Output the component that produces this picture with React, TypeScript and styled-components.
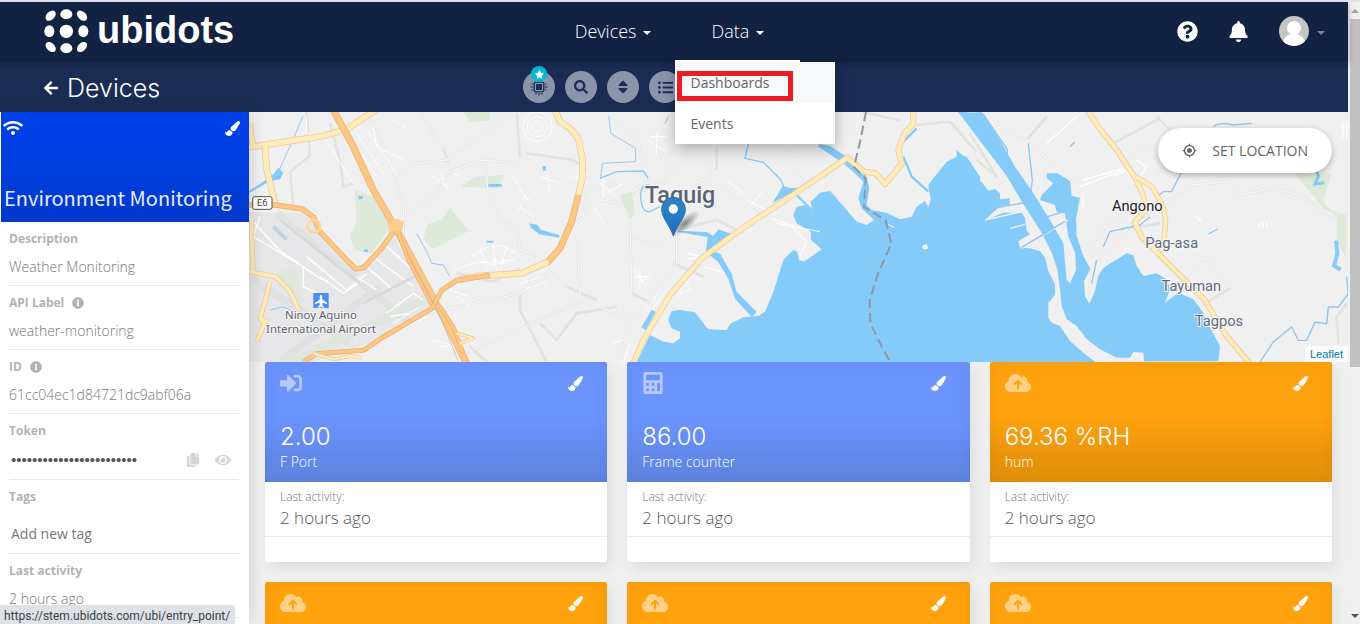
import React from "react";
import styled, { createGlobalStyle } from "styled-components";
import {
  FaArrowLeft, FaBell, FaCalculator, FaCopy, FaEye, FaInfoCircle, FaListUl, FaPaintBrush,
  FaQuestionCircle, FaSearch, FaSignInAlt, FaSort, FaStar, FaWifi,
} from "react-icons/fa";
import { FaCloudArrowUp } from "react-icons/fa6";
import { MdMyLocation } from "react-icons/md";

const GlobalStyle = createGlobalStyle`
  * { box-sizing: border-box; }
  body { margin: 0; background: #f0f0f0; font-family: "Open Sans", "Noto Sans", sans-serif; color: #666; }
  button { border: 0; padding: 0; background: none; font: inherit; color: inherit; cursor: pointer; }
  a { color: inherit; text-decoration: none; }
  h1, h2, p, dl, dd, ul { margin: 0; padding: 0; }
  svg { display: block; }
`;

const Window = styled.div`
  display: flex;
  height: 100vh;
  overflow: hidden;
  border-top: 2px solid #dee1e8;
`;
const Page = styled.div`
  flex: 1;
  min-width: 0;
  display: flex;
  flex-direction: column;
`;
const Header = styled.header`
  position: relative;
  z-index: 3;
  flex: none;
  height: 60px;
  padding: 0 23px 2px 44px;
  display: grid;
  grid-template-columns: 1fr auto 1fr;
  align-items: center;
  background: #122243;
  box-shadow: 0 2px 6px rgba(10, 20, 45, 0.35);
`;
const Brand = styled.a`
  display: flex;
  align-items: center;
  gap: 8px;
  color: #fff;
  font: bold 38px/54px "Liberation Sans", Arial, sans-serif;
`;
const BrandName = styled.span`
  margin-bottom: 2px;
`;
const Nav = styled.nav`
  display: flex;
  gap: 60px;
  margin-right: 30px;
`;
const NavItem = styled.div`
  position: relative;
`;
const NavButton = styled.button`
  display: flex;
  align-items: center;
  gap: 7px;
  color: #fff;
  font-size: 18px;
  font-weight: 300;
  line-height: 28px;
`;
const Caret = styled.span<{ $dim?: boolean }>`
  border: 4px solid transparent;
  border-top-color: ${(p) => (p.$dim ? "#7a839a" : "#fff")};
  border-bottom: 0;
  margin-top: 4px;
`;
const Menu = styled.ul`
  position: absolute;
  top: 45px;
  left: -36px;
  width: 160px;
  list-style: none;
  background: #fff;
  box-shadow: 0 5px 14px rgba(0, 0, 0, 0.28);
  &::before {
    content: "";
    position: absolute;
    bottom: 100%;
    left: 0;
    width: 125px;
    height: 2px;
    background: #fff;
  }
`;
const MenuLink = styled.a<{ $active?: boolean }>`
  position: relative;
  display: block;
  padding: 0 15px;
  font-size: 14px;
  line-height: 41px;
  color: #666;
  background: ${(p) => (p.$active ? "#f8f9fb" : "#fff")};
`;
const Highlight = styled.span`
  position: absolute;
  top: 9px;
  left: 2px;
  width: 116px;
  height: 30px;
  border: 5px solid #ed1c24;
`;
const UserTools = styled.div`
  display: flex;
  align-items: center;
  justify-content: flex-end;
  color: #fff;
`;
const ToolButton = styled.button`
  margin-right: 30px;
`;
const Account = styled.button`
  display: flex;
  align-items: center;
  gap: 8px;
`;
const SubHeader = styled.div`
  flex: none;
  height: 50px;
  display: flex;
  align-items: center;
  background: #1a2c54;
  color: #fff;
`;
const BackLink = styled.a`
  flex: 0 0 523px;
  padding: 2px 0 0 43px;
  display: flex;
  align-items: center;
  gap: 8px;
  font-size: 16px;
`;
const PageTitle = styled.h1`
  font: 300 25px/32px Inter, sans-serif;
`;
const Toolbar = styled.div`
  display: flex;
  gap: 10px;
`;
const RoundButton = styled.button`
  position: relative;
  width: 32px;
  height: 32px;
  border-radius: 50%;
  display: grid;
  place-items: center;
  background: #8b94aa;
  color: #1a2c54;
`;
const StarBadge = styled.span`
  position: absolute;
  top: -5px;
  left: 8px;
  width: 16px;
  height: 16px;
  border-radius: 50%;
  display: grid;
  place-items: center;
  background: #00bcd4;
  color: #fff;
`;
const Body = styled.div`
  flex: 1;
  min-height: 0;
  display: flex;
`;
const Sidebar = styled.aside`
  position: relative;
  z-index: 2;
  flex: 0 0 249px;
  min-width: 0;
  border-left: 1px solid #fff;
  background: #fff;
  box-shadow: 3px 0 14px rgba(0, 0, 0, 0.12);
`;
const DeviceHead = styled.div`
  height: 110px;
  padding: 5px 9px 9px 2px;
  display: flex;
  flex-direction: column;
  justify-content: space-between;
  color: #fff;
  background: linear-gradient(#0040e8, #003ee0 50%, #0038cb);
`;
const HeadIcons = styled.div`
  height: 22px;
  display: flex;
  justify-content: space-between;
  align-items: center;
`;
const DeviceName = styled.h2`
  padding-left: 1px;
  font: 400 20px/30px "Noto Sans CJK JP", "Noto Sans", sans-serif;
  color: #e6ebff;
  white-space: nowrap;
`;
const Field = styled.div<{ $height?: number }>`
  height: ${(p) => p.$height ?? 64}px;
  margin: 0 10px 0 8px;
  padding-top: 8px;
  border-bottom: 1px solid #e8e8e8;
`;
const FieldLabel = styled.dt`
  display: flex;
  align-items: center;
  gap: 8px;
  font-size: 12px;
  font-weight: 700;
  line-height: 18px;
  color: #b3b3b3;
`;
const FieldValue = styled.dd`
  padding-top: 8px;
  font-size: 14px;
  font-weight: 300;
  line-height: 22px;
  color: #777;
`;
const TokenRow = styled.div`
  display: flex;
  align-items: center;
  gap: 15px;
  padding: 1px 8px 0 0;
  color: #d4d4d4;
`;
const TokenInput = styled.input`
  flex: 1;
  min-width: 0;
  border: 0;
  padding: 0 2px;
  background: none;
  font: 15px/22px "Liberation Sans", sans-serif;
  color: #555;
  outline: 0;
`;
const TagInput = styled.input`
  width: 100%;
  margin-top: 9px;
  border: 0;
  padding: 0 2px;
  background: none;
  font: 14px/22px "Open Sans", sans-serif;
  outline: 0;
  &::placeholder { color: #777; opacity: 1; }
`;
const Main = styled.main`
  flex: 1;
  min-width: 0;
  overflow: hidden;
`;
const MapPanel = styled.section`
  position: relative;
  height: 250px;
  background: #f0f0f0;
`;
const SetLocation = styled.button`
  position: absolute;
  top: 16px;
  right: 16px;
  height: 45px;
  padding: 0 24px;
  border-radius: 23px;
  display: flex;
  align-items: center;
  gap: 15px;
  background: #fff;
  color: #666;
  font-size: 14px;
  box-shadow: 0 2px 6px rgba(0, 0, 0, 0.3);
`;
const Attribution = styled.a`
  position: absolute;
  right: 0;
  bottom: 0;
  padding: 0 5px;
  background: rgba(255, 255, 255, 0.75);
  color: #0078a8;
  font: 11px/16px "Liberation Sans", Arial, sans-serif;
`;
const CardGrid = styled.section`
  display: grid;
  grid-template-columns: repeat(3, 1fr);
  gap: 20px;
  padding: 0 16px 20px;
`;
const Card = styled.article`
  height: 200px;
  border-radius: 2px;
  overflow: hidden;
  background: #fff;
  box-shadow: 4px 6px 14px rgba(0, 0, 0, 0.08);
`;
const CardHead = styled.div<{ $tone: "blue" | "orange" }>`
  height: 120px;
  padding: 10px 24px 10px 15px;
  display: flex;
  flex-direction: column;
  justify-content: space-between;
  color: #fff;
  background: ${(p) =>
    p.$tone === "blue"
      ? "linear-gradient(#6b94ff 45%, #6289e9 80%, #6084e0)"
      : "linear-gradient(#ffa20d 45%, #e8940c 80%, #e2900a)"};
  box-shadow: inset 0 0 18px rgba(0, 0, 0, 0.05);
`;
const CardIcon = styled.span`
  opacity: 0.5;
`;
const Reading = styled.p`
  font: 300 24px/30px Inter, sans-serif;
`;
const VariableName = styled.p`
  font-size: 14px;
  font-weight: 300;
  line-height: 20px;
`;
const CardBody = styled.div`
  height: 55px;
  padding: 6px 15px 0;
  border-bottom: 1px solid #eaeaea;
  font-weight: 300;
`;
const Small = styled.p`
  font-size: 12px;
  line-height: 18px;
  color: #777;
`;
const Ago = styled.p`
  font-size: 17px;
  line-height: 24px;
  color: #555;
`;
const ScrollTrack = styled.div`
  flex: 0 0 12px;
  display: flex;
  flex-direction: column;
  justify-content: space-between;
  align-items: flex-end;
  background: #f0f0f0;
`;
const ScrollEnd = styled.span<{ $down?: boolean }>`
  width: 10px;
  height: 17px;
  display: grid;
  place-items: center;
  &::before {
    content: "";
    border: 4px solid transparent;
    ${(p) => (p.$down ? "border-top-color: #505050; border-bottom: 0;" : "border-bottom-color: #a3a3a3; border-top: 0;")}
  }
`;
const ScrollThumb = styled.span`
  width: 10px;
  height: 56%;
  margin-bottom: auto;
  background: #c1c1c1;
`;
const StatusBubble = styled.div`
  position: fixed;
  left: 0;
  bottom: 0;
  z-index: 5;
  padding: 4px 5px 0 4px;
  border-radius: 0 4px 0 0;
  background: #dee1e6;
  color: #3c4043;
  font-family: Roboto, sans-serif;
  font-size: 12px;
  line-height: 15px;
  white-space: nowrap;
`;

const LogoMark = () => (
  <svg width="45" height="45" viewBox="0 0 135 135" fill="#fff">
    <ellipse cx="67" cy="16" rx="18" ry="15" />
    <ellipse cx="67" cy="67" rx="20" ry="20" />
    <ellipse cx="67" cy="118" rx="18" ry="15" />
    <ellipse cx="16" cy="67" rx="15" ry="18" />
    <ellipse cx="118" cy="67" rx="15" ry="18" />
    <ellipse cx="20" cy="20" rx="18" ry="12" transform="rotate(-45 20 20)" />
    <ellipse cx="114" cy="20" rx="18" ry="12" transform="rotate(45 114 20)" />
    <ellipse cx="20" cy="114" rx="18" ry="12" transform="rotate(45 20 114)" />
    <ellipse cx="114" cy="114" rx="18" ry="12" transform="rotate(-45 114 114)" />
  </svg>
);

const ChipIcon = () => (
  <svg width="18" height="18" viewBox="0 0 18 18" fill="none" stroke="currentColor">
    <rect x="4.2" y="4.2" width="9.6" height="9.6" rx="1.5" strokeWidth="1.3" />
    <rect x="6" y="6" width="6" height="6" fill="currentColor" stroke="none" />
    <path d="M6 3V1.5M9 3V.5M12 3V1.5M6 15v1.5M9 15v2.5M12 15v1.5M3 6H1.5M3 9H.5M3 12H1.5M15 6h1.5M15 9h2.5M15 12h1.5" strokeWidth="1.2" />
  </svg>
);

const Avatar = () => (
  <svg width="30" height="30" viewBox="0 0 30 30">
    <defs><clipPath id="face"><circle cx="15" cy="15" r="15" /></clipPath></defs>
    <g clipPath="url(#face)">
      <rect width="30" height="30" fill="#c4c4c4" />
      <circle cx="15" cy="12" r="7" fill="#fff" />
      <path d="M3 31c0-8 5-12 9-13h6c4 1 9 5 9 13z" fill="#fff" />
    </g>
  </svg>
);

// Road drawn as a wide casing with a lighter fill on top of it.
const Road = ({ d, tone = "yellow", w = 16 }: { d: string; tone?: "yellow" | "orange"; w?: number }) => (
  <g fill="none" strokeLinejoin="round">
    <path d={d} stroke={tone === "orange" ? "#e6ad79" : "#ecc4a0"} strokeWidth={w + 4} />
    <path d={d} stroke={tone === "orange" ? "#fdc681" : "#fdebb8"} strokeWidth={w} />
  </g>
);

const StreetMap = () => (
  <svg width="100%" height="100%" viewBox="27 6 3297 750" preserveAspectRatio="xMinYMin slice" aria-label="Map of Taguig">
    <defs>
      <linearGradient id="pin" x1="0" y1="0" x2="0" y2="1">
        <stop offset="0" stopColor="#2e86c8" /><stop offset="1" stopColor="#1a6fc0" />
      </linearGradient>
      <radialGradient id="shade"><stop offset="0" stopColor="#000" stopOpacity=".45" /><stop offset="1" stopColor="#000" stopOpacity="0" /></radialGradient>
    </defs>
    <rect x="0" y="0" width="3400" height="800" fill="#f0f0f0" />

    {/* Airport and the city west of it */}
    <g>
      <path d="M27 305L200 310 350 480 460 380 590 580 440 680 220 756H27z" fill="#e7e7e9" />
      <path d="M110 310l400 330M27 500l300 200M420 530l-300 226" stroke="#dfe2e0" strokeWidth="22" fill="none" />
      <path d="M570 575L190 756h-60l420-200z" fill="#dfe6dd" />
      <path d="M27 320l90 100 130 90M60 320l-20 60 150 90v60l80 40M200 440l120 100 60-50M240 500l70 50 60-40M400 440l120 90M430 400l120 110M380 470l80 70M350 500l60 40M440 610l80-60 30 20M450 620l60-10" stroke="#fff" strokeWidth="4" fill="none" />
      <path d="M100 350l40 38" stroke="#b7d4e8" strokeWidth="12" />
      <path d="M370 580l170-90M120 330l240 190" stroke="#d9d9db" strokeWidth="8" />
      <path d="M345 240l60 20 15 40 30 15-5 50-20 20-30 45-50-10-15-40 20-50-5-60z" fill="#dfe9d9" />
      <path d="M632 293l55 70-110 55-28-30 14-45 42-15zM660 230l45-30 90-5-20 40zM670 6h80v25l-60 5zM110 485l50-10 25 30-10 40 20 30-25 5-40-60z" fill="#dfe9d9" />
      <path d="M390 6l70 180 30 100v100M460 200l70-40 90-10 70-50 120-90M300 150l10 80 30-10M540 6l70 110 15 40M490 320l90-60 60-80 90-30 100 10 30-30 140 20 40 30M735 160l10 90 40 80 45 20 10 70 60 20 80 90 90 40M830 10l10 130M650 490l110 25 80-40M560 610l280-60 80-60M690 710l50 45M840 550v50l80 156M700 720l200-90 130-60M1010 370l10 190M900 640l50 50 60-80 120-20M200 6l10 130-60 50 10 100M270 40l30 110M970 380l60-60 10-80 90-20" stroke="#e2e2e0" strokeWidth="8" fill="none" />
      <path d="M390 6l70 180 30 100v100M460 200l70-40 90-10 70-50 120-90M540 6l70 110M490 320l90-60 60-80 90-30 100 10 30-30M735 160l10 90 40 80 45 20 10 70 60 20 80 90M560 610l280-60 80-60M700 720l200-90 130-60M1010 370l10 190M970 380l60-60 10-80 90-20" stroke="#f7f7f6" strokeWidth="4" fill="none" />
      <g stroke="#fff" strokeWidth="3" fill="none">
        <circle cx="892" cy="50" r="44" /><circle cx="892" cy="50" r="30" /><circle cx="892" cy="50" r="16" />
        <path d="M330 80l80 120M350 70l80 120M380 60l90 130M460 30l40 25M700 440q60-60 130-10M690 460l130-10M720 415l20 65M760 405l10 80M800 410l-20 70M690 430q60 60 140 10M640 480l60-20M820 200l40 70 30-30M840 290l40 30M860 250l-30 60M900 200l60 20M920 190l10 60M990 200l60 20M580 200l40 30M600 190l30 60M640 190l50 20M1060 290l40 60M840 520l70-20M850 540l70-25M650 560l40 30M580 690l70 20M600 710h50M630 540l60 20M460 640l80-50M480 660l80-40" strokeDasharray="26 5" />
        <path d="M400 50l10 60 80 40M250 80l90 140M200 20v50l60 20" />
      </g>
      <path d="M188 20l-25 60-45 100-85 65M530 370l30 55 15 35 35 5 20 35M90 600l40-10 60 30" stroke="#9dc6ee" strokeWidth="3" fill="none" />
      <path d="M27 243l70-45 18-25 15 15-10 20-30 5-60 35z" fill="#84cbfa" />
      <path d="M868 340l25 5 10 15 55 15v8l-60-10-25-20zM745 222h40v8h-40zM356 258h12v10h-12zM372 418h12v8h-12zM740 392h20v6h-20zM908 168h10v14h-10z" fill="#84cbfa" />
      <Road d="M27 40l12 70M27 112l53-8 170-26 70-20 90-60" />
      <Road d="M75 108l5 70 25 100" />
      <Road d="M34 330l5 160M27 485l80 15 40 40 30 60M90 515l-15 60-15 50 15 10-25 60M60 630l25 5" w={11} />
      <Road d="M945 0l15 35 30 20 25 30 12 60v60l-12 50" />
      <Road d="M1015 255l-20 80-35 80-40 45" tone="orange" />
      <Road d="M925 455l-80 35-130 8-60 12" />
      <Road d="M27 285h80l80 12 35 25 15 40 80 85 30 30 25-5 55-60 50-70" tone="orange" w={12} />
      <Road d="M280 0l60 110 60 130 70 120 70 130 80 150 60 120" tone="orange" w={17} />
      <Road d="M475 370l30 80 50 95 25 50M600 590l40 60 30 80" tone="orange" w={8} />
      <Road d="M190 756l40-25 140-10 60-40 145-85 30-55 45-30 100-15" tone="orange" w={11} />
      <Road d="M220 730l60 18 50-10 35 6M650 670l50 15-40 15" w={7} />
      <circle cx="222" cy="349" r="19" fill="none" stroke="#fbd79d" strokeWidth="8" />
      <path d="M442 345l25-20 25 10-5 25-40 5z" fill="#fbd08f" />
      <path d="M505 430l100 200 50 125" stroke="#c9b29a" strokeWidth="2" fill="none" />
      <rect x="38" y="260" width="58" height="38" rx="6" fill="#fff" stroke="#555" strokeWidth="3" />
      <text x="67" y="289" fontFamily="Roboto" fontSize="28" fill="#444" textAnchor="middle">E6</text>
      <rect x="220" y="549" width="46" height="45" fill="#4a90f0" />
      <path d="M243 555c3 0 4 4 4 8v6l14 9v4l-14-4v8l5 4v3l-9-2-9 2v-3l5-4v-8l-14 4v-4l14-9v-6c0-4 1-8 4-8z" fill="#fff" />
      <g fontFamily="Noto Sans" fontSize="34" fill="#5d6068" stroke="#f4f4f4" strokeWidth="6" paintOrder="stroke" textAnchor="middle">
        <text x="243" y="627">Ninoy Aquino</text>
        <text x="243" y="670">International Airport</text>
      </g>
    </g>

    {/* Taguig and the western bay */}
    <g transform="translate(1080 0)">
      <path d="M20 20l90 60 30 130-60 50M150 60l60 130 60-80M270 100l70 80-60 60M60 270l140-60M0 270l60 10 30 40 5 230M100 380l80 30M0 590l90 40 60-60 80-110v-100M90 630l-30 120M95 550l60 30M230 360l120-30 80 40M290 200l120 60 100 60M560 110l50 120M350 180v-70M220 460l90 40" stroke="#e2e2e0" strokeWidth="8" fill="none" />
      <path d="M20 20l90 60 30 130-60 50M150 60l60 130 60-80M270 100l70 80-60 60M60 270l140-60M0 270l60 10 30 40 5 230M100 380l80 30M0 590l90 40 60-60 80-110v-100M90 630l-30 120M290 200l120 60 100 60M560 110l50 120" stroke="#f8f8f7" strokeWidth="4" fill="none" />
      <path d="M150 80h50M150 95l45 30M170 70v60M0 220l50 40M10 200v60M20 250l50-30M100 480l40 50M105 500h40M110 520l40-20M120 480v60M180 540l-40 60M190 550l-40 60M240 520q30-20 30 20l-30 10zM260 430l50 10M260 445h60M310 470l70 20M90 700l-20 56M70 690l-30 10M380 210l50 40M440 270l60 30M450 290l40-50" stroke="#fff" strokeWidth="3" fill="none" />
      <path d="M60 258l35-15 10 65-15 20z" fill="#dfe9d9" />
      <path d="M27 20l5 50 75 45v40l-100 5-5 45M195 40l10-20" stroke="#9dc6ee" strokeWidth="3" fill="none" />
      <path d="M0 205l50-20 80-2 15 22M150 225q-30-5-28 40 5 45 28 40l30-15" stroke="#84cbfa" strokeWidth="4" fill="none" />
      <path d="M445 100l-10 45 55 12 50 50 15 30 50-2" stroke="#84cbfa" strokeWidth="4" fill="none" />
      <path d="M518 278l30-50 45 12zM155 600l12 5-30 55-13-8z" fill="#84cbfa" />
      <path d="M110 756l40-81 40 20 30 5 20-15v-20l-25-10-10-25 10-27 25-3 45 7 25 33 15 18 55 2 10-18 40-20 45-4 20-13 25-60 30-95 30-30 12 5 5 25 15 5 53-37-32-28-1-25-42-25-10-25 10-25 25-5 22 18-5-28 28-27 30-5 20 22 30 35 30 35 30 10 22-15-22-20-15-15-10-30 15-50-20-20-40-35-75-50v-8l35 6 50 32 60 60 8 35-8 50 15 15 45 8 40 20 35-8 15-30 25-17 10 19 7-22-7-45 15-20 40-50 40-20 20 5 40 60V756z" fill="#84cbfa" />
      <path d="M235 362l85 4 20 12 15-20 50 18-75 45 30 10 35 60 15 55 60 60-15 15-50-55-20-60-30-50-25-20-12-15 5-40-90-15z" fill="#84cbfa" />
      <path d="M590 255l45 45M910 140l25 60 50 45M905 100l45-45" stroke="#84cbfa" strokeWidth="7" fill="none" />
      <path d="M510 325l60 20 50 50-20 40M530 340l130 25" stroke="#fff" strokeWidth="3" fill="none" />
      <path d="M865 343l18 10M968 408l12-4 2 12h-12z" stroke="#fff" strokeWidth="3" fill="#f0f0f0" />
      <path d="M950 45l100-10 80 90M790 6l110 25" stroke="#e2e2e0" strokeWidth="7" fill="none" />
      <Road d="M100 760l30-70 80-135 95-110 115-85 210-140 112-77 50 42 35 5 28 32 50-60-10-45 20-50 25-25V6" w={14} />
      <path d="M798 6l-18 90-18 75 35 35-5 85 65 40 17 70-40 90-25 80 2 70 40 80 22 40" stroke="#9296a3" strokeWidth="6" fill="none" strokeDasharray="28 14" />
      <text x="240" y="280" fontFamily="Roboto" fontSize="70" fontWeight="500" fill="#5a6478" stroke="#f4f4f4" strokeWidth="7" paintOrder="stroke" textAnchor="middle">Taguig</text>
      <ellipse cx="255" cy="340" rx="55" ry="20" fill="url(#shade)" transform="rotate(-40 255 340)" />
      <path d="M220 378c-8-28-35-55-35-80a35.500 36 0 0 1 71 0c0 25-28 52-36 80z" fill="url(#pin)" stroke="#2a6ba5" strokeWidth="3" />
      <circle cx="220" cy="297" r="14" fill="#fff" />
    </g>

    {/* Angono and the eastern shore */}
    <g transform="translate(2190 0)">
      <path d="M0 70l80 130-60-50M80 50l90 40 60-70M170 90l140 130 240-120M370 30l60 70 130-70M560 20l60 60M350 430l60-90 120-50M350 430l40 15 90-100 190-120 100-10 40 40 100-20 80 20 90 70 60-20 25-90M600 540l110-95 70 90-80 50M450 360l120-20M1130 580l-30 40 5 80" stroke="#e2e2e0" strokeWidth="8" fill="none" />
      <path d="M80 50l90 40M170 90l140 130 240-120M370 30l60 70M350 430l60-90 120-50M350 430l40 15 90-100 190-120 100-10 40 40 100-20 80 20 90 70 60-20M600 540l110-95 70 90" stroke="#f8f8f7" strokeWidth="4" fill="none" />
      <path d="M230 100l90-80M330 230l130-50M340 210l120-35M500 150l30 20-20 30M1118 35v50M1130 35v50M865 340l5 15M878 335v20M890 335v15M680 320l15 15M340 250v40M430 200l40-20 10 20" stroke="#fff" strokeWidth="4" fill="none" />
      <path d="M975 190h110l-25 80 20 30 50 15v130l-30-50v-80l-40-20-50-60z" fill="#dfe9d9" />
      <path d="M1040 180l5 20-10 22 28-4" stroke="#84cbfa" strokeWidth="9" fill="none" />
      <path d="M1098 392l4 40-10 35 20 12" stroke="#84cbfa" strokeWidth="12" fill="none" />
      <path d="M0 155l30 55 25 32 20-5 15 13v18l28-3 2 20-30 3-45 42 55-22h55l10 15 5 40 10 10-35 20 5 20 30 2 30 8 15 20 10 40 20 40v30l-20 30v40l10 15 25 10 30 45 40 35 40 31H-40V120z" fill="#84cbfa" />
      <path d="M0 8l35-2 55 84 45 80 55 80 50 80 40 70 10 110 10 10 18-40-2-50-21-50-10-70-25-5-5-20-45-15 5-15 35-35-20-15v-15h32l38 23 5 45 25 5-12 65 2 50 20 60 22 40-20 35 3 45 13 23 17-38 10-45 15-25 70-43 20 6 10 32 20 30 40-8 30 18 10 30-15 40 40-30 45 20 30 40 25 55 25 45-5 46H522l-2-26-30-2-10 17h-40l-50-25-40-30-30-40-30-20-15-40-5-50-8-60-17-50-30-60-55-85-50-85L-40 0z" fill="#84cbfa" />
      <path d="M45 330l110-25M155 415l140-85M120 355l45-12M345 515l30-60M235 580l35-25" stroke="#f0f0f0" strokeWidth="4" fill="none" />
      <path d="M38 10l75 110-5 25M175 100l12 110-5 40M70 295l110-20M225 322l60-18M155 412l130-78M380 450l-15 70M300 110l15-15M560 260l20-15h25l30-60M730 50q20-15 60-5l55-5M400 410l20-45 90-20 30-25M715 372l28-15M870 756l40-60 55-45 20 40h25l25-55 35 5 5-50h30l30-40M1130 500l5 60" stroke="#92c2ef" strokeWidth="4" fill="none" />
      <Road d="M352 0l40 60 45 55 60 90 22 50 10 45-35 35 20 45 120 120 70 70 60 100 75 90" w={13} />
      <Road d="M497 200l50 30 32 60 8 40-5 60-10 35" w={12} />
      <g fontFamily="Roboto" fontSize="44" stroke="#f6f6f6" strokeWidth="6" paintOrder="stroke" textAnchor="middle" fill="#5f6b7d">
        <text x="502" y="303" fill="#222">Angono</text>
        <text x="605" y="415">Pag-asa</text>
        <text x="664" y="542">Tayuman</text>
        <text x="747" y="648">Tagpos</text>
      </g>
    </g>
  </svg>
);

type Variable = { icon: React.ReactNode; tone: "blue" | "orange"; value: string; name: string };
const cloud = <FaCloudArrowUp size={26} />;
const variables: Variable[] = [
  { icon: <FaSignInAlt size={22} />, tone: "blue", value: "2.00", name: "F Port" },
  { icon: <FaCalculator size={22} />, tone: "blue", value: "86.00", name: "Frame counter" },
  { icon: cloud, tone: "orange", value: "69.36 %RH", name: "hum" },
  { icon: cloud, tone: "orange", value: "", name: "" },
  { icon: cloud, tone: "orange", value: "", name: "" },
  { icon: cloud, tone: "orange", value: "", name: "" },
];

const VariableCard = ({ icon, tone, value, name }: Variable) => (
  <Card>
    <CardHead $tone={tone}>
      <HeadIcons>
        <CardIcon>{icon}</CardIcon>
        <button aria-label="Change colour"><FaPaintBrush size={15} /></button>
      </HeadIcons>
      <div>
        <Reading>{value}</Reading>
        <VariableName>{name}</VariableName>
      </div>
    </CardHead>
    {value && (
      <CardBody>
        <Small>Last activity:</Small>
        <Ago>2 hours ago</Ago>
      </CardBody>
    )}
  </Card>
);

export default function App() {
  return (
    <>
      <GlobalStyle />
      <Window>
        <Page>
          <Header>
            <Brand href="#"><LogoMark /><BrandName>ubidots</BrandName></Brand>
            <Nav>
              <NavItem><NavButton>Devices <Caret /></NavButton></NavItem>
              <NavItem>
                <NavButton aria-expanded>Data <Caret /></NavButton>
                <Menu>
                  <li><MenuLink href="#" $active>Dashboards<Highlight /></MenuLink></li>
                  <li><MenuLink href="#">Events</MenuLink></li>
                </Menu>
              </NavItem>
            </Nav>
            <UserTools>
              <ToolButton aria-label="Help"><FaQuestionCircle size={21} /></ToolButton>
              <ToolButton aria-label="Notifications"><FaBell size={21} /></ToolButton>
              <Account aria-label="Account"><Avatar /><Caret $dim /></Account>
            </UserTools>
          </Header>
          <SubHeader>
            <BackLink href="#"><FaArrowLeft /><PageTitle>Devices</PageTitle></BackLink>
            <Toolbar>
              <RoundButton aria-label="Device type"><ChipIcon /><StarBadge><FaStar size={9} /></StarBadge></RoundButton>
              <RoundButton aria-label="Search"><FaSearch size={14} /></RoundButton>
              <RoundButton aria-label="Sort"><FaSort size={16} /></RoundButton>
              <RoundButton aria-label="List"><FaListUl size={15} /></RoundButton>
            </Toolbar>
          </SubHeader>
          <Body>
            <Sidebar>
              <DeviceHead>
                <HeadIcons>
                  <FaWifi size={20} />
                  <button aria-label="Change colour"><FaPaintBrush size={15} /></button>
                </HeadIcons>
                <DeviceName>Environment Monitoring</DeviceName>
              </DeviceHead>
              <dl>
                <Field><FieldLabel>Description</FieldLabel><FieldValue>Weather Monitoring</FieldValue></Field>
                <Field><FieldLabel>API Label <FaInfoCircle /></FieldLabel><FieldValue>weather-monitoring</FieldValue></Field>
                <Field><FieldLabel>ID <FaInfoCircle /></FieldLabel><FieldValue>61cc04ec1d84721dc9abf06a</FieldValue></Field>
                <Field $height={66}>
                  <FieldLabel>Token</FieldLabel>
                  <FieldValue>
                    <TokenRow>
                      <TokenInput type="password" aria-label="Token" readOnly value="abcdefghijklmnopqrstuvwx" />
                      <button aria-label="Copy token"><FaCopy size={14} /></button>
                      <button aria-label="Show token"><FaEye size={16} /></button>
                    </TokenRow>
                  </FieldValue>
                </Field>
                <Field $height={74}>
                  <FieldLabel>Tags</FieldLabel>
                  <FieldValue><TagInput aria-label="Tags" placeholder="Add new tag" /></FieldValue>
                </Field>
                <Field><FieldLabel>Last activity</FieldLabel><FieldValue>2 hours ago</FieldValue></Field>
              </dl>
            </Sidebar>
            <Main>
              <MapPanel>
                <StreetMap />
                <SetLocation><MdMyLocation size={15} />SET LOCATION</SetLocation>
                <Attribution href="#">Leaflet</Attribution>
              </MapPanel>
              <CardGrid>
                {variables.map((v, i) => <VariableCard key={i} {...v} />)}
              </CardGrid>
            </Main>
          </Body>
        </Page>
        <ScrollTrack><ScrollEnd /><ScrollThumb /><ScrollEnd $down /></ScrollTrack>
      </Window>
      <StatusBubble>https://stem.ubidots.com/ubi/entry_point/</StatusBubble>
    </>
  );
}
